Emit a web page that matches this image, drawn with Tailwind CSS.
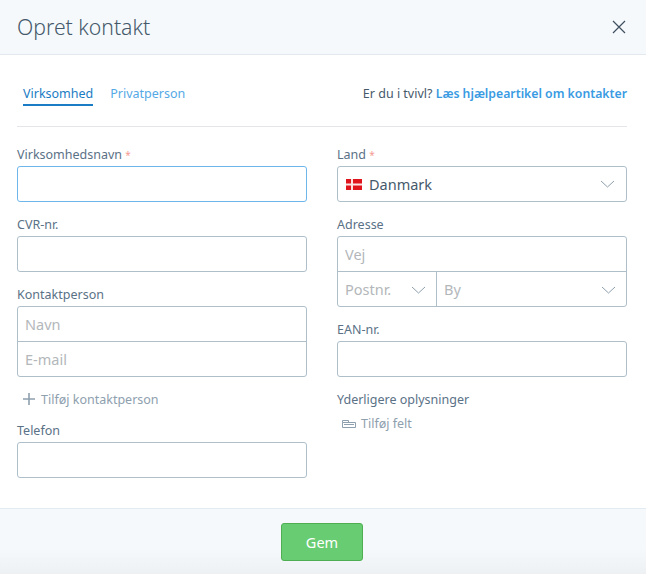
<!DOCTYPE html>
<html lang="da">
  <head>
    <meta charset="UTF-8" />
    <title>Opret kontakt</title>
    <script src="https://cdn.jsdelivr.net/npm/@tailwindcss/browser@4"></script>
  </head>

  <body class="w-[646px] h-[574px] overflow-hidden bg-white font-['Noto_Sans',sans-serif] text-[12.5px] text-[#5a7186]">
    <!-- Header -->
    <div class="h-[55px] flex items-center justify-between pl-[17px] pr-[20px] bg-[#f5f9fc] border-b border-[#e3e9ee]">
      <h1 class="text-[21.2px] font-light text-[#46596b]">Opret kontakt</h1>
      <svg width="14" height="14" viewBox="0 0 14 14" fill="none" stroke="#3e4f5e" stroke-width="1.2">
        <path d="M1 1l12 12M13 1L1 13" />
      </svg>
    </div>

    <div class="h-[453px] pl-[17px] pr-[19px]">
      <!-- Tabs -->
      <div class="h-[72px] flex items-center justify-between border-b border-[#e3e5e8] pt-[7px]">
        <div class="flex gap-[17px] pl-[6px]">
          <a class="h-[24px] leading-[24px] text-[#1a7cc4] border-b-2 border-[#1a7cc4]">Virksomhed</a>
          <a class="h-[24px] leading-[24px] text-[#55a9e6]">Privatperson</a>
        </div>
        <p class="text-[#46596b]">Er du i tvivl? <a class="font-semibold text-[12.25px] text-[#3a9be3]">Læs hjælpeartikel om kontakter</a></p>
      </div>

      <!-- Form -->
      <div class="grid grid-cols-2 gap-x-[30px] pt-[17px]">
        <div class="flex flex-col">
          <label class="h-5 mb-[2px] leading-[22px]">Virksomhedsnavn <span class="text-[10px] text-[#f59a92]">*</span></label>
          <input class="h-[36px] px-[7px] border border-[#6fb6ea] rounded-[3px] outline-none" />

          <label class="h-5 mb-px leading-5 mt-[13px]">CVR-nr.</label>
          <input class="h-[36px] px-[7px] border border-[#aebfca] rounded-[3px] outline-none" />

          <label class="h-5 mb-px leading-5 mt-[13px]">Kontaktperson</label>
          <div class="flex flex-col border border-[#aebfca] rounded-[3px] divide-y divide-[#aebfca]">
            <input placeholder="Navn" class="h-[35px] px-[7px] text-[14.5px] outline-none placeholder:text-[#b3b7ba]" />
            <input placeholder="E-mail" class="h-[34px] px-[7px] text-[14.5px] outline-none placeholder:text-[#b3b7ba]" />
          </div>

          <div class="h-[22px] mt-[11px] flex items-center gap-[5px] pl-[5px] text-[#8ea0ae]">
            <svg width="14" height="14" viewBox="0 0 14 14" fill="none" stroke="#8ea0ae" stroke-width="1.6">
              <path d="M7 1v12M1 7h12" />
            </svg>
            <span class="pt-[2px]">Tilføj kontaktperson</span>
          </div>

          <label class="h-5 mb-[2px] leading-[22px] mt-[10px]">Telefon</label>
          <input class="h-[36px] px-[7px] border border-[#aebfca] rounded-[3px] outline-none" />
        </div>

        <div class="flex flex-col">
          <label class="h-5 mb-[2px] leading-[22px]">Land <span class="text-[10px] text-[#f59a92]">*</span></label>
          <div class="h-[36px] flex items-center pl-[8px] pr-[11px] border border-[#aebfca] rounded-[3px]">
            <svg width="16" height="11" viewBox="0 0 16 11" class="mr-[7px]">
              <rect width="16" height="11" fill="#e0141c" />
              <path d="M0 5.5h16M6 0v11" stroke="#fbe3e3" stroke-width="2" />
            </svg>
            <span class="flex-1 pt-[2px] text-[14.5px] text-[#46596b]">Danmark</span>
            <svg width="15" height="8" viewBox="0 0 15 8" fill="none" stroke="#8ea0ae">
              <path d="M1 1l6.5 6L14 1" />
            </svg>
          </div>

          <label class="h-5 mb-px leading-5 mt-[13px]">Adresse</label>
          <div class="flex flex-col border border-[#aebfca] rounded-[3px] divide-y divide-[#aebfca]">
            <input placeholder="Vej" class="h-[35px] px-[7px] text-[14.5px] outline-none placeholder:text-[#b3b7ba]" />
            <div class="h-[34px] flex divide-x divide-[#aebfca] text-[14.5px] text-[#b3b7ba]">
              <div class="w-[99px] flex items-center justify-between pl-[7px] pr-[10px] pt-[2px]">
                <span>Postnr.</span>
                <svg width="15" height="8" viewBox="0 0 15 8" fill="none" stroke="#8ea0ae">
                  <path d="M1 1l6.5 6L14 1" />
                </svg>
              </div>
              <div class="flex-1 flex items-center justify-between pl-[7px] pr-[10px] pt-[2px]">
                <span>By</span>
                <svg width="15" height="8" viewBox="0 0 15 8" fill="none" stroke="#8ea0ae">
                  <path d="M1 1l6.5 6L14 1" />
                </svg>
              </div>
            </div>
          </div>

          <label class="h-5 mb-[2px] leading-[22px] mt-[12px]">EAN-nr.</label>
          <input class="h-[36px] px-[7px] border border-[#aebfca] rounded-[3px] outline-none" />

          <label class="h-5 leading-[22px] mt-[12px]">Yderligere oplysninger</label>
          <div class="h-[22px] mt-[3px] flex items-center gap-[5px] pl-[5px] text-[#8ea0ae]">
            <svg width="14" height="9" viewBox="0 0 14 9" fill="none" stroke="#8ea0ae">
              <path d="M.5 3.5h13v5H.5zM.5 3.5v-2h6v2" />
              <path d="M2 5.5h10" />
            </svg>
            <span class="pt-[2px]">Tilføj felt</span>
          </div>
        </div>
      </div>
    </div>

    <!-- Footer -->
    <div class="h-[66px] flex justify-center pt-[14px] pr-[2px] border-t border-[#e3ebf2] bg-linear-to-b from-[#f5f9fc] from-60% to-[#eef1f4]">
      <button class="w-[82px] h-[38px] pt-[2px] rounded-[3px] border border-[#4fae52] bg-[#68cd72] text-[14.5px] text-white">Gem</button>
    </div>
  </body>
</html>
